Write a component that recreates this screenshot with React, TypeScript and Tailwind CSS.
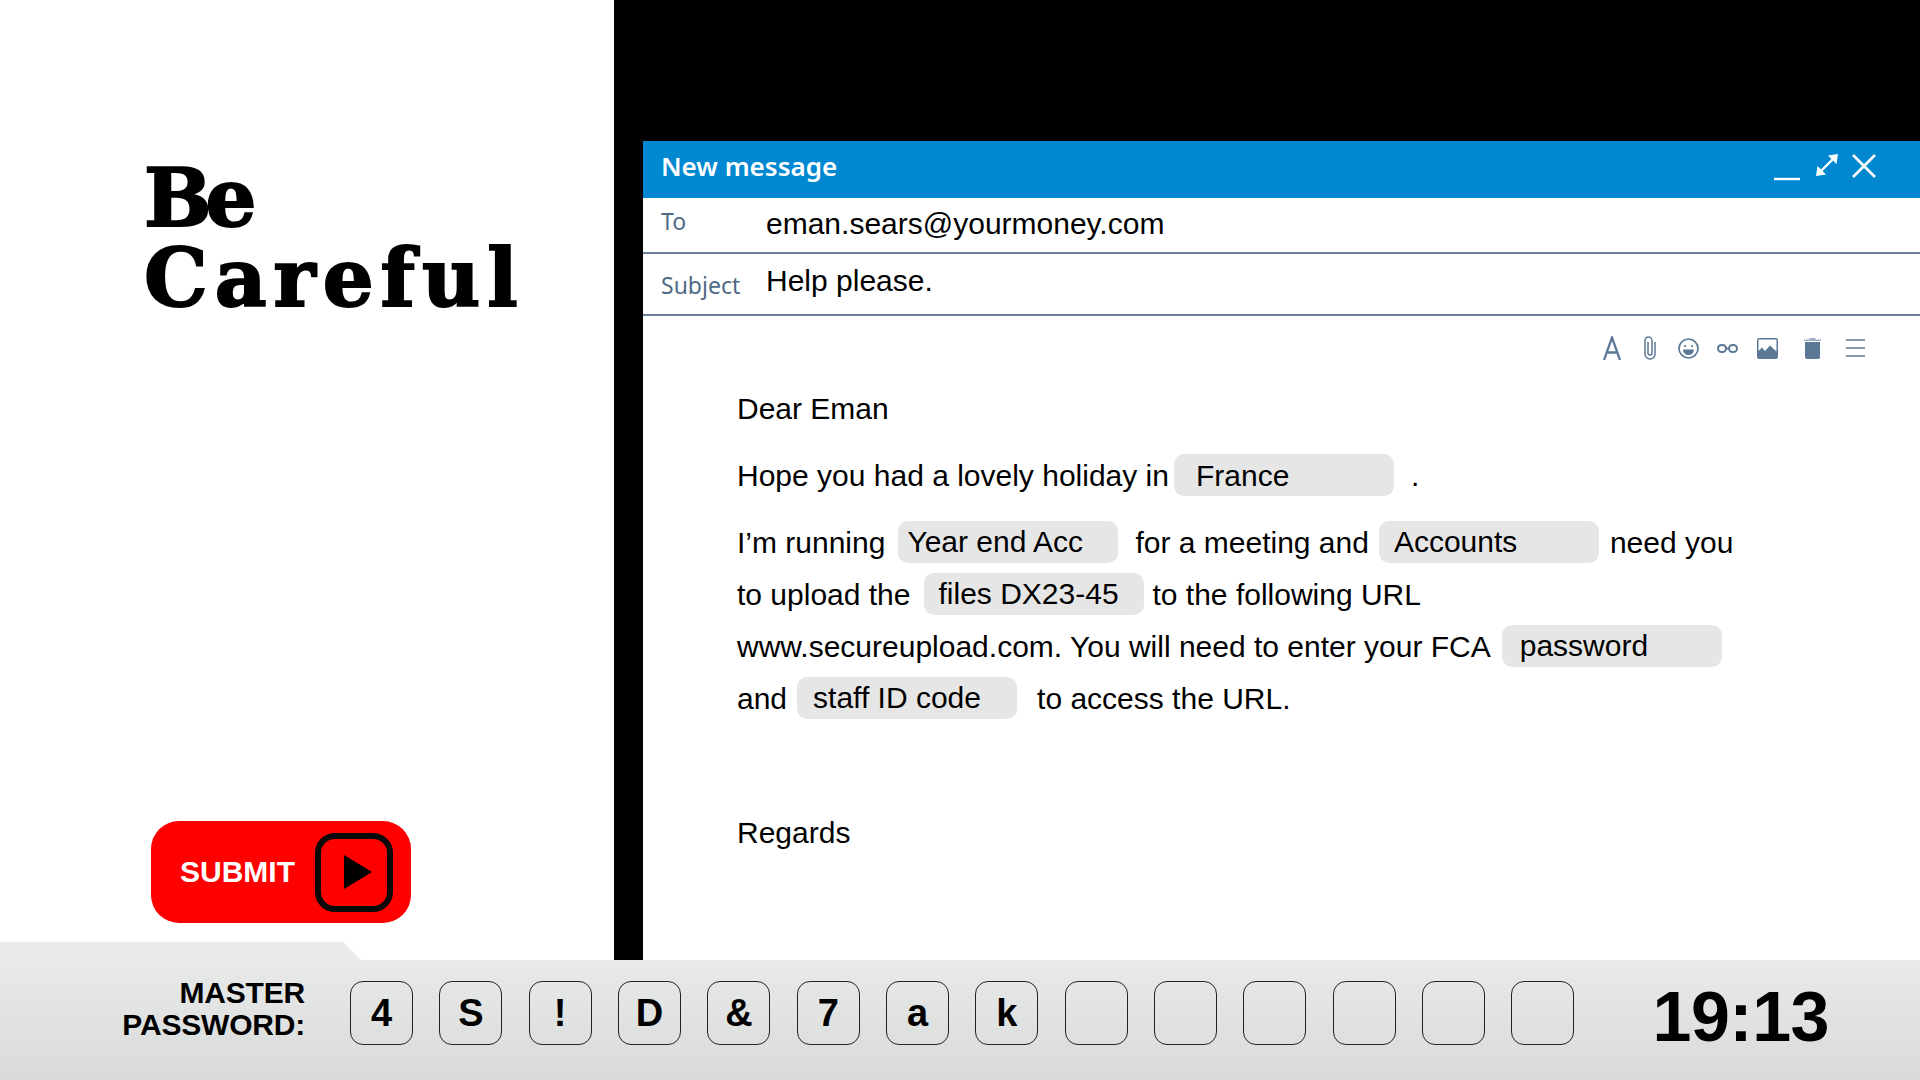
import React from 'react';

const arial = 'font-["Liberation_Sans",Arial,sans-serif]';

const keys = ['4', 'S', '!', 'D', '&', '7', 'a', 'k', '', '', '', '', '', ''];

const Chip = ({ text, className }: { text: string; className: string }) => (
  <span className={`flex h-[42px] w-[220px] shrink-0 items-center rounded-[10px] bg-[#e6e6e6] ${className}`}>{text}</span>
);

const ToolbarIcons = () => (
  <div className="flex h-[67px] items-center justify-end pb-[3px] pr-[55px] text-[#5b7896]">
    <svg width="18" height="24" viewBox="0 0 18 24" fill="none" stroke="currentColor" strokeWidth="2.3">
      <path d="M1 24 L9 1.5 L17 24 M4 16.5 H14" />
    </svg>
    <svg className="ml-[23px]" width="12" height="24" viewBox="0 0 12 24" fill="none" stroke="currentColor" strokeWidth="1.5">
      <path d="M4 6 V17 a2 2 0 0 0 4 0 V4.5 a3.5 3.5 0 0 0 -7 0 V18 a5 5 0 0 0 10 0 V6" />
    </svg>
    <svg className="ml-[22px]" width="21" height="21" viewBox="0 0 21 21" fill="none" stroke="currentColor" strokeWidth="1.7">
      <circle cx="10.5" cy="10.5" r="9.5" />
      <circle cx="7" cy="8" r="1.1" fill="currentColor" stroke="none" />
      <circle cx="14" cy="8" r="1.1" fill="currentColor" stroke="none" />
      <path d="M5 11.5 H16 a5.5 5.5 0 0 1 -11 0 Z" fill="currentColor" stroke="none" />
    </svg>
    <svg className="ml-[18px]" width="21" height="9" viewBox="0 0 21 9" fill="none" stroke="currentColor" strokeWidth="2">
      <rect x="1" y="1" width="8" height="7" rx="3.5" />
      <rect x="12" y="1" width="8" height="7" rx="3.5" />
      <path d="M8 4.5 H13" />
    </svg>
    <svg className="ml-[19px]" width="21" height="21" viewBox="0 0 21 21">
      <path
        fillRule="evenodd"
        fill="currentColor"
        d="M2 0 H19 a2 2 0 0 1 2 2 V19 a2 2 0 0 1 -2 2 H2 a2 2 0 0 1 -2 -2 V2 a2 2 0 0 1 2 -2 Z M1.5 1.5 V13 L5 9.5 L8 13 L13 7.5 L19.5 13.5 V1.5 Z"
      />
    </svg>
    <svg className="ml-[26px]" width="17" height="21" viewBox="0 0 17 21" fill="currentColor">
      <path d="M0 1.5 H5 L6 0 H11 L12 1.5 H17 V3 H0 Z" opacity="0.6" />
      <path d="M1 4 H16 V19 a2 2 0 0 1 -2 2 H3 a2 2 0 0 1 -2 -2 Z" />
    </svg>
    <svg className="ml-[25px]" width="19" height="18" viewBox="0 0 19 18" fill="none" stroke="currentColor" strokeWidth="1.7">
      <path d="M0 1 H19 M0 9 H19 M0 17 H19" />
    </svg>
  </div>
);

export default function App() {
  return (
    <div className={`relative flex h-[1080px] w-[1920px] flex-col overflow-hidden bg-white text-black ${arial}`}>
      <div className="flex h-[960px]">
        <div className="flex w-[614px] shrink-0 flex-col bg-white pl-[144px]">
          <h1 className='mt-[158px] h-[160px] font-["DejaVu_Serif",serif] text-[80px] font-bold leading-[80px] tracking-[7px] [-webkit-text-stroke:2px_#000]'>
            <span className="tracking-[-6px]">Be</span>
            <br />
            Careful
          </h1>
          <button className="mt-[503px] flex h-[102px] w-[260px] items-center rounded-[28px] bg-[#ff0000] ml-[7px] pl-[29px]">
            <span className="-mt-[2px] text-[30px] font-bold text-white">SUBMIT</span>
            <span className="ml-[20px] flex h-[79px] w-[78px] items-center justify-center rounded-[20px] border-[6px] border-[#0a0a0a] pl-[8px]">
              <svg width="28" height="34" viewBox="0 0 28 34">
                <path d="M0 0 L28 17 L0 34 Z" fill="#000" />
              </svg>
            </span>
          </button>
        </div>
        <div className="flex-1 bg-black pl-[29px] pt-[141px]">
          <div className="flex h-[819px] flex-col bg-white">
            <div className="flex h-[57px] shrink-0 items-center justify-between bg-[#0288d1] pl-[18px] pr-[44px] text-white">
              <span className='-mt-[7px] font-["Noto_Sans",sans-serif] text-[26px] font-semibold'>New message</span>
              <div className="flex items-center">
                <svg className="-mt-[4px]" width="26" height="26" viewBox="0 0 26 26" stroke="#fff" strokeWidth="2.4">
                  <path d="M0 24 H26" />
                </svg>
                <svg className="ml-[16px] -mt-[9px]" width="22" height="22" viewBox="0 0 22 22" fill="#fff" stroke="none">
                  <path d="M22 0 L20.5 10 L12 1.5 Z M0 22 L1.5 12 L10 20.5 Z" />
                  <path d="M5 17 L17 5" stroke="#fff" strokeWidth="2.4" />
                </svg>
                <svg className="ml-[14px] -mt-[7px]" width="24" height="24" viewBox="0 0 24 24" stroke="#fff" strokeWidth="2.6">
                  <path d="M1 1 L23 23 M23 1 L1 23" />
                </svg>
              </div>
            </div>
            <div className="flex h-[56px] shrink-0 items-center border-b-2 border-[#6d8198] pl-[18px]">
              <span className='-mt-[7px] w-[105px] font-["Noto_Sans",sans-serif] text-[23px] text-[#4f6a86]'>To</span>
              <span className="-mt-[4px] text-[30px]">eman.sears@yourmoney.com</span>
            </div>
            <div className="flex h-[62px] shrink-0 items-center border-b-2 border-[#6d8198] pl-[18px]">
              <span className='mt-[3px] w-[105px] font-["Noto_Sans",sans-serif] text-[23px] text-[#4f6a86]'>Subject</span>
              <span className="-mt-[8px] text-[30px]">Help please.</span>
            </div>
            <ToolbarIcons />
            <div className="flex flex-col pl-[94px] text-[30px] leading-[34px]">
              <p className="flex h-[52px] items-center">Dear Eman</p>
              <div className="mt-[15px] flex h-[52px] items-center">
                <span>Hope you had a lovely holiday in</span>
                <Chip text="France" className="ml-[5px] -mt-[3px] pl-[22px] pt-[2px]" />
                <span className="ml-[17px]">.</span>
              </div>
              <div className="mt-[15px] flex h-[52px] items-center">
                <span>I’m running</span>
                <Chip text="Year end Acc" className="ml-[13px] -mt-[2px] pl-[9px]" />
                <span className="ml-[17px]">for a meeting and</span>
                <Chip text="Accounts" className="ml-[10px] -mt-[2px] pl-[15px]" />
                <span className="ml-[11px]">need you</span>
              </div>
              <div className="flex h-[52px] items-center">
                <span>to upload the</span>
                <Chip text="files DX23-45" className="ml-[14px] -mt-[2px] pl-[14px]" />
                <span className="ml-[8px]">to the following URL</span>
              </div>
              <div className="flex h-[52px] items-center">
                <span>www.secureupload.com. You will need to enter your FCA</span>
                <Chip text="password" className="ml-[11px] -mt-[2px] pl-[18px]" />
              </div>
              <div className="flex h-[52px] items-center">
                <span>and</span>
                <Chip text="staff ID code" className="ml-[10px] -mt-[2px] pl-[16px]" />
                <span className="ml-[20px]">to access the URL.</span>
              </div>
              <p className="mt-[82px] flex h-[52px] items-center">Regards</p>
            </div>
          </div>
        </div>
      </div>

      <div className="relative h-[120px] bg-gradient-to-b from-[#e8eaea] to-[#d9dbdb]">
        <div className="absolute bottom-full left-0 h-[18px] w-[361px] bg-[#e9ebeb] [clip-path:polygon(0_0,343px_0,100%_100%,0_100%)]" />
        <div className="flex h-full items-start pt-[17px]">
          <div className="w-[305px] text-right text-[30px] font-bold leading-[32px] tracking-[-0.2px]">
            MASTER
            <br />
            PASSWORD:
          </div>
          <div className="ml-[45px] mt-[4px] flex gap-[26.35px]">
            {keys.map((key, index) => (
              <div
                key={index}
                className="flex h-[64px] w-[63px] items-center justify-center rounded-[13px] border-[1.5px] border-[#222] text-[38px] font-bold"
              >
                {key}
              </div>
            ))}
          </div>
          <div className="ml-[78px] text-[70px] font-bold leading-[80px] tracking-[-0.5px]">19:13</div>
        </div>
      </div>
    </div>
  );
}
